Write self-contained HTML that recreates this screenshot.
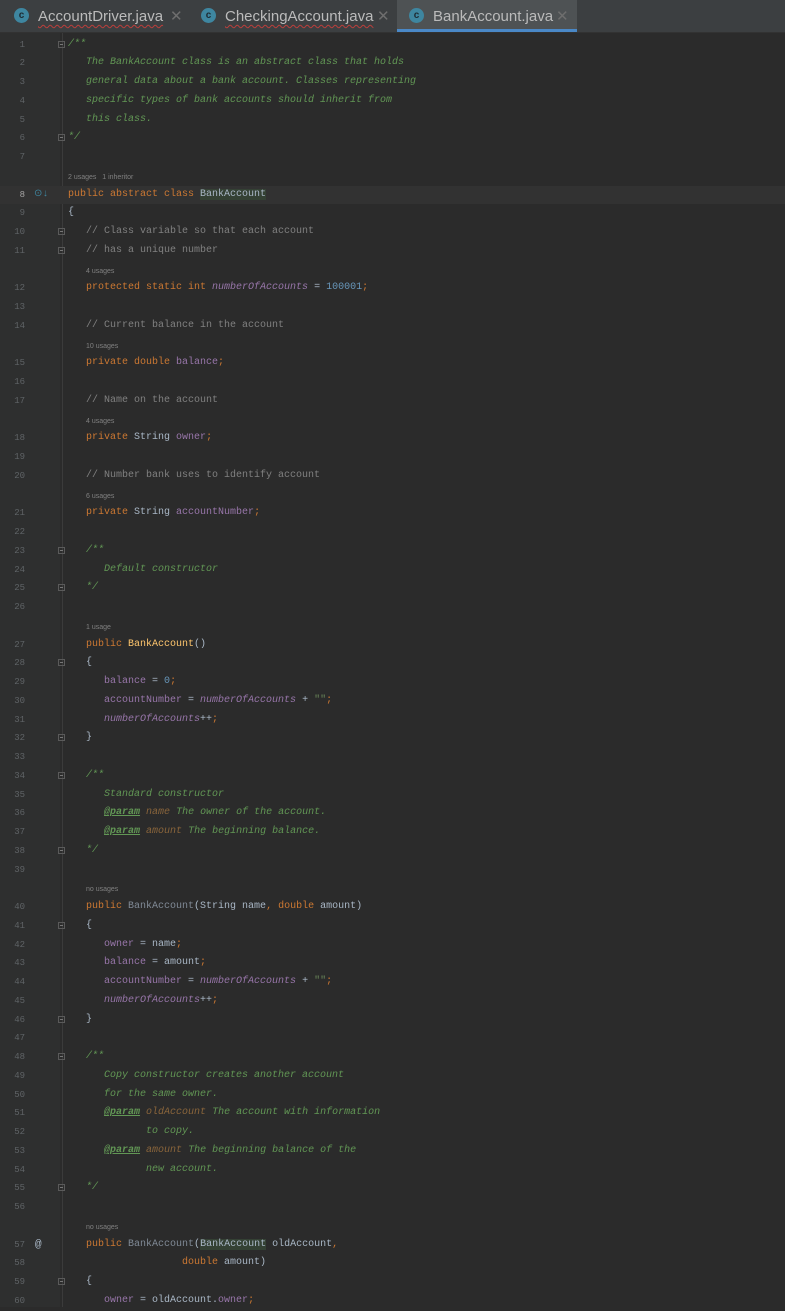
<!DOCTYPE html><html><head><meta charset="utf-8"><style>
body{margin:0;width:785px;height:1307px;overflow:hidden;background:#2b2b2b;font-family:"Liberation Mono",monospace;position:relative}
#tabs{position:absolute;left:0;top:0;width:785px;height:32px;background:#3c3f41;border-bottom:1px solid #323232}
.tab{position:absolute;top:0;height:32px;font-family:"Liberation Sans",sans-serif;font-size:15px;color:#bbbbbb;line-height:34px}
.tab .ic{position:absolute;top:8px;width:15px;height:15px;border-radius:50%;background:#3e86a0;color:#1d2b33;font-size:10px;font-weight:bold;text-align:center;line-height:15px}
.tab .x{position:absolute;top:0;color:#6e6e6e;font-size:15px}
.red{text-decoration:underline wavy #bc3f3c;text-decoration-thickness:1px;text-underline-offset:3px}
#gut{position:absolute;left:0;top:33px;width:60px;height:1274px;background:#2e2f2f}
#vl{position:absolute;left:62px;top:33px;width:1px;height:1274px;background:#3b3b3b}
#rows{position:absolute;left:0;top:35.6px;width:785px}
.r{height:18.75px;position:relative;white-space:pre;font-size:10px;line-height:18.75px;color:#a9b7c6}
.ln{position:absolute;left:0;width:25px;text-align:right;color:#5f6366;font-size:9px}
.cd{position:absolute;left:68px}
.h{font-family:"Liberation Sans",sans-serif;font-size:7px;color:#808080;position:absolute;left:86px;top:2px}
.k{color:#cc7832}.c{color:#629755;font-style:italic}.lc{color:#808080}.f{color:#9876aa}.fi{color:#9876aa;font-style:italic}.n{color:#6897bb}.s{color:#6a8759}.m{color:#ffc66d}.g{color:#808a96}
.p{color:#629755;font-style:italic;font-weight:bold;text-decoration:underline}.pn{color:#8a653b;font-style:italic}
.fold{position:absolute;left:58px;top:5px;width:7px;height:7px;border:1px solid #5a5a5a;box-sizing:border-box}
.fold:after{content:"";position:absolute;left:1px;top:2px;width:3px;height:1px;background:#777}
.cur{background:#323232}
.hl{background:#344134}
</style></head><body>
<div id="tabs">
<div class="tab" style="left:14px;width:175px"><span class="ic" style="left:0">c</span><span style="position:absolute;left:24px" class="red">AccountDriver.java</span><span class="x" style="left:156px">✕</span></div>
<div class="tab" style="left:201px;width:190px"><span class="ic" style="left:0">c</span><span style="position:absolute;left:24px" class="red">CheckingAccount.java</span><span class="x" style="left:176px">✕</span></div>
<div class="tab" style="left:397px;width:180px;background:#4e5254"><span class="ic" style="left:12px">c</span><span style="position:absolute;left:36px">BankAccount.java</span><span class="x" style="left:159px">✕</span><div style="position:absolute;left:0;bottom:0;width:180px;height:3px;background:#4a88c7"></div></div>
</div>
<div id="gut"></div><div id="vl"></div>
<div id="rows">
<div class="r"><span class="ln">1</span><span class="fold"></span><span class="cd c">/**</span></div>
<div class="r"><span class="ln">2</span><span class="cd c">   The BankAccount class is an abstract class that holds</span></div>
<div class="r"><span class="ln">3</span><span class="cd c">   general data about a bank account. Classes representing</span></div>
<div class="r"><span class="ln">4</span><span class="cd c">   specific types of bank accounts should inherit from</span></div>
<div class="r"><span class="ln">5</span><span class="cd c">   this class.</span></div>
<div class="r"><span class="ln">6</span><span class="fold"></span><span class="cd c">*/</span></div>
<div class="r"><span class="ln">7</span></div>
<div class="r"><span class="h" style="left:68px">2 usages &nbsp; 1 inheritor</span></div>
<div class="r cur"><span class="ln" style="color:#a4a3a3">8</span><span style="position:absolute;left:34px;color:#3e86a0;font-size:10px">⊙↓</span><span class="cd"><span class="k">public abstract class </span><span class="hl">BankAccount</span></span></div>
<div class="r"><span class="ln">9</span><span class="cd">{</span></div>
<div class="r"><span class="ln">10</span><span class="fold"></span><span class="cd lc">   // Class variable so that each account</span></div>
<div class="r"><span class="ln">11</span><span class="fold"></span><span class="cd lc">   // has a unique number</span></div>
<div class="r"><span class="h">4 usages</span></div>
<div class="r"><span class="ln">12</span><span class="cd">   <span class="k">protected static int </span><span class="fi">numberOfAccounts</span> = <span class="n">100001</span><span class="k">;</span></span></div>
<div class="r"><span class="ln">13</span></div>
<div class="r"><span class="ln">14</span><span class="cd lc">   // Current balance in the account</span></div>
<div class="r"><span class="h">10 usages</span></div>
<div class="r"><span class="ln">15</span><span class="cd">   <span class="k">private double </span><span class="f">balance</span><span class="k">;</span></span></div>
<div class="r"><span class="ln">16</span></div>
<div class="r"><span class="ln">17</span><span class="cd lc">   // Name on the account</span></div>
<div class="r"><span class="h">4 usages</span></div>
<div class="r"><span class="ln">18</span><span class="cd">   <span class="k">private </span>String <span class="f">owner</span><span class="k">;</span></span></div>
<div class="r"><span class="ln">19</span></div>
<div class="r"><span class="ln">20</span><span class="cd lc">   // Number bank uses to identify account</span></div>
<div class="r"><span class="h">6 usages</span></div>
<div class="r"><span class="ln">21</span><span class="cd">   <span class="k">private </span>String <span class="f">accountNumber</span><span class="k">;</span></span></div>
<div class="r"><span class="ln">22</span></div>
<div class="r"><span class="ln">23</span><span class="fold"></span><span class="cd c">   /**</span></div>
<div class="r"><span class="ln">24</span><span class="cd c">      Default constructor</span></div>
<div class="r"><span class="ln">25</span><span class="fold"></span><span class="cd c">   */</span></div>
<div class="r"><span class="ln">26</span></div>
<div class="r"><span class="h">1 usage</span></div>
<div class="r"><span class="ln">27</span><span class="cd">   <span class="k">public </span><span class="m">BankAccount</span>()</span></div>
<div class="r"><span class="ln">28</span><span class="fold"></span><span class="cd">   {</span></div>
<div class="r"><span class="ln">29</span><span class="cd">      <span class="f">balance</span> = <span class="n">0</span><span class="k">;</span></span></div>
<div class="r"><span class="ln">30</span><span class="cd">      <span class="f">accountNumber</span> = <span class="fi">numberOfAccounts</span> + <span class="s">""</span><span class="k">;</span></span></div>
<div class="r"><span class="ln">31</span><span class="cd">      <span class="fi">numberOfAccounts</span>++<span class="k">;</span></span></div>
<div class="r"><span class="ln">32</span><span class="fold"></span><span class="cd">   }</span></div>
<div class="r"><span class="ln">33</span></div>
<div class="r"><span class="ln">34</span><span class="fold"></span><span class="cd c">   /**</span></div>
<div class="r"><span class="ln">35</span><span class="cd c">      Standard constructor</span></div>
<div class="r"><span class="ln">36</span><span class="cd c">      <span class="p">@param</span> <span class="pn">name</span> The owner of the account.</span></div>
<div class="r"><span class="ln">37</span><span class="cd c">      <span class="p">@param</span> <span class="pn">amount</span> The beginning balance.</span></div>
<div class="r"><span class="ln">38</span><span class="fold"></span><span class="cd c">   */</span></div>
<div class="r"><span class="ln">39</span></div>
<div class="r"><span class="h">no usages</span></div>
<div class="r"><span class="ln">40</span><span class="cd">   <span class="k">public </span><span class="g">BankAccount</span>(String name<span class="k">, double </span>amount)</span></div>
<div class="r"><span class="ln">41</span><span class="fold"></span><span class="cd">   {</span></div>
<div class="r"><span class="ln">42</span><span class="cd">      <span class="f">owner</span> = name<span class="k">;</span></span></div>
<div class="r"><span class="ln">43</span><span class="cd">      <span class="f">balance</span> = amount<span class="k">;</span></span></div>
<div class="r"><span class="ln">44</span><span class="cd">      <span class="f">accountNumber</span> = <span class="fi">numberOfAccounts</span> + <span class="s">""</span><span class="k">;</span></span></div>
<div class="r"><span class="ln">45</span><span class="cd">      <span class="fi">numberOfAccounts</span>++<span class="k">;</span></span></div>
<div class="r"><span class="ln">46</span><span class="fold"></span><span class="cd">   }</span></div>
<div class="r"><span class="ln">47</span></div>
<div class="r"><span class="ln">48</span><span class="fold"></span><span class="cd c">   /**</span></div>
<div class="r"><span class="ln">49</span><span class="cd c">      Copy constructor creates another account</span></div>
<div class="r"><span class="ln">50</span><span class="cd c">      for the same owner.</span></div>
<div class="r"><span class="ln">51</span><span class="cd c">      <span class="p">@param</span> <span class="pn">oldAccount</span> The account with information</span></div>
<div class="r"><span class="ln">52</span><span class="cd c">             to copy.</span></div>
<div class="r"><span class="ln">53</span><span class="cd c">      <span class="p">@param</span> <span class="pn">amount</span> The beginning balance of the</span></div>
<div class="r"><span class="ln">54</span><span class="cd c">             new account.</span></div>
<div class="r"><span class="ln">55</span><span class="fold"></span><span class="cd c">   */</span></div>
<div class="r"><span class="ln">56</span></div>
<div class="r"><span class="h">no usages</span></div>
<div class="r"><span class="ln">57</span><span style="position:absolute;left:35px;color:#a9b7c6;font-size:11px">@</span><span class="cd">   <span class="k">public </span><span class="g">BankAccount</span>(<span class="hl">BankAccount</span> oldAccount<span class="k">,</span></span></div>
<div class="r"><span class="ln">58</span><span class="cd">                   <span class="k">double </span>amount)</span></div>
<div class="r"><span class="ln">59</span><span class="fold"></span><span class="cd">   {</span></div>
<div class="r"><span class="ln">60</span><span class="cd">      <span class="f">owner</span> = oldAccount.<span class="f">owner</span><span class="k">;</span></span></div>
</div>
</body></html>
